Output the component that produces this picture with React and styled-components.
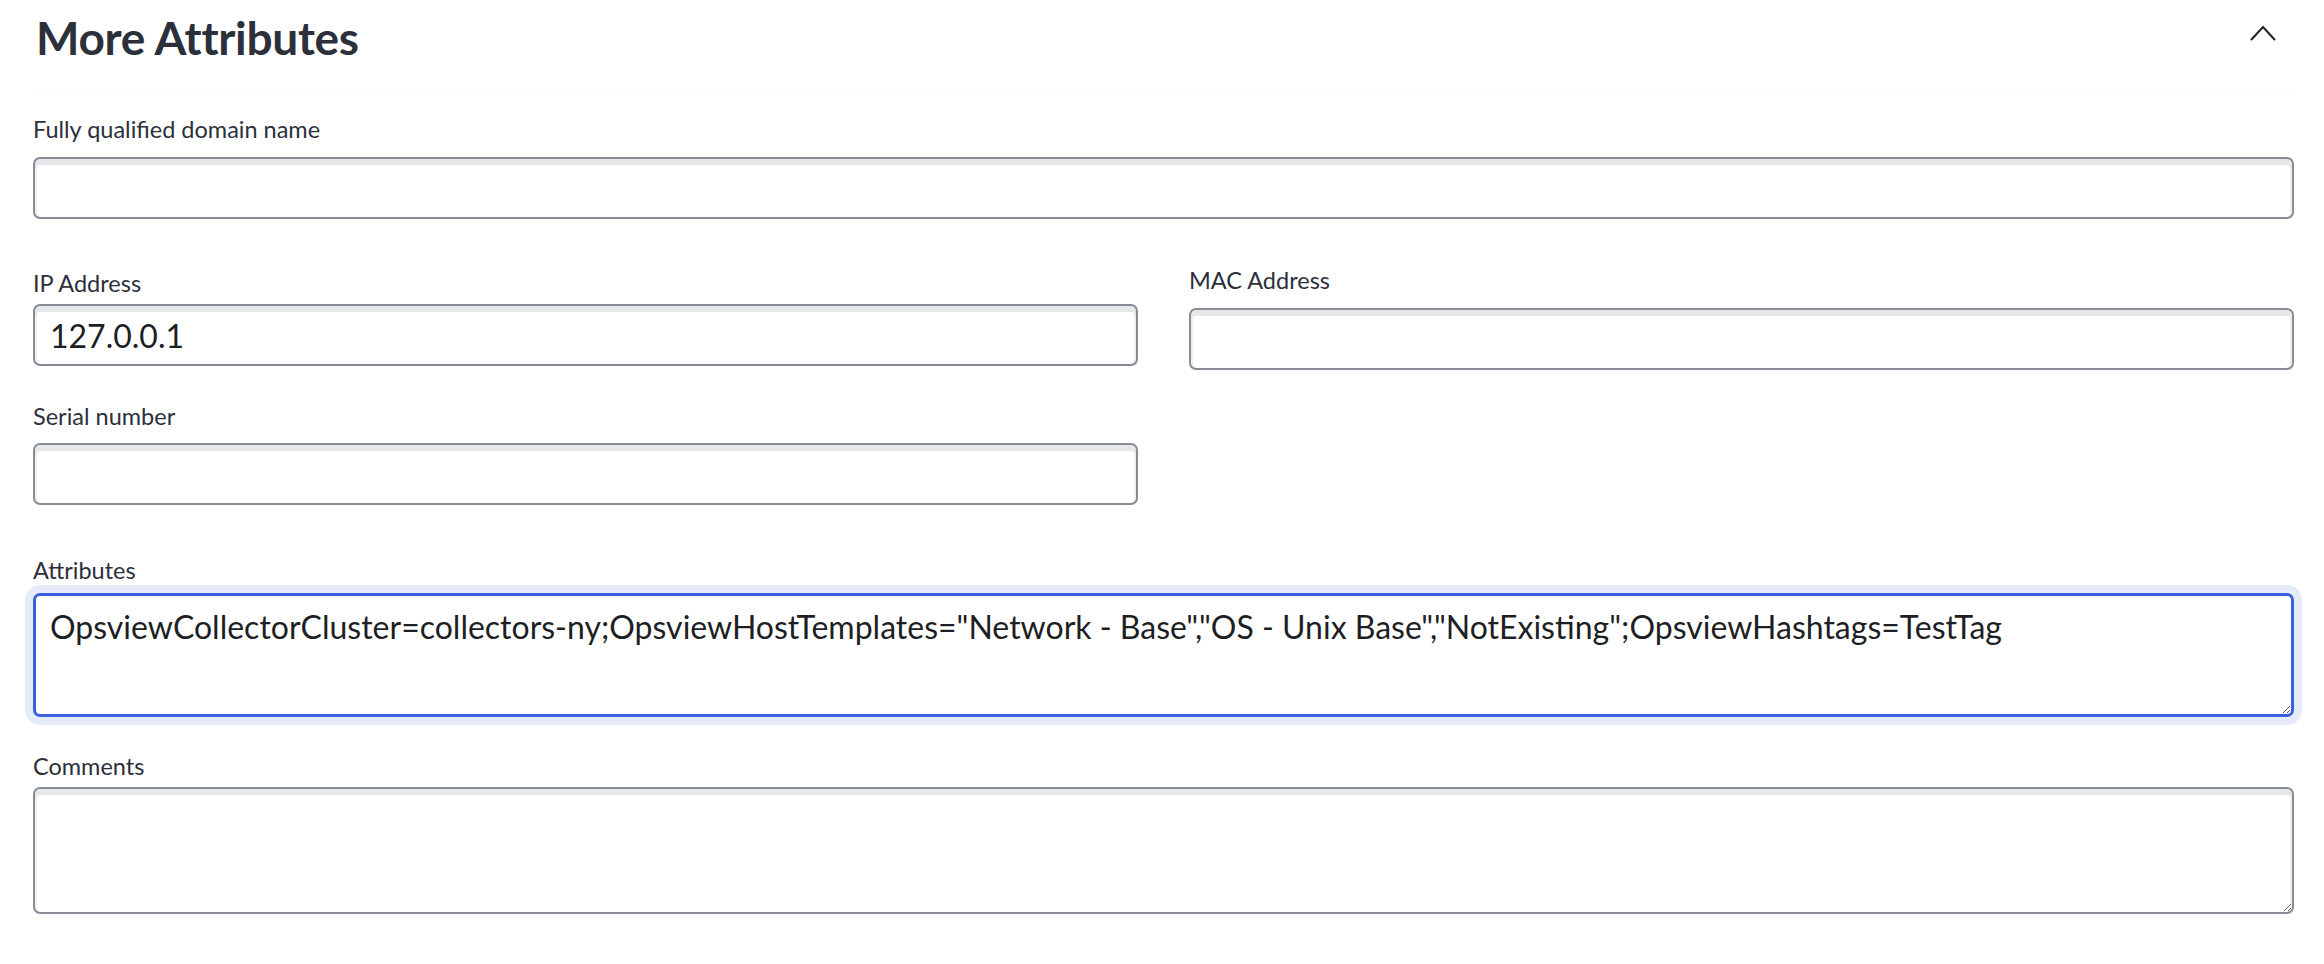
import React from "react";
import styled, { createGlobalStyle } from "styled-components";

const GlobalStyle = createGlobalStyle`
  body {
    margin: 0;
    background: #ffffff;
    font-family: Lato, "Open Sans", sans-serif;
    color: #2b303b;
  }
`;

const Section = styled.section`
  padding: 10px 30px 30px 33px;
`;

const Header = styled.div`
  display: flex;
  justify-content: space-between;
  align-items: flex-start;
  height: 78px;
  border-bottom: 1px dotted #f7f7f8;
  margin-bottom: 26px;
`;

const Title = styled.h2`
  margin: 0;
  padding-left: 3px;
  font-size: 46px;
  line-height: 55px;
  font-weight: 700;
  color: #2b303b;
  letter-spacing: -0.3px;
`;

const Toggle = styled.button`
  border: 0;
  background: none;
  padding: 0;
  margin: 15px 18px 0 0;
  cursor: pointer;
  display: flex;
`;

const Form = styled.form`
  display: flex;
  flex-direction: column;
`;

const Row = styled.div`
  display: grid;
  grid-template-columns: 1fr 1fr;
  column-gap: 51px;
  align-items: start;
  margin-top: ${(p) => p.$mt || 0}px;
`;

const Field = styled.div`
  display: flex;
  flex-direction: column;
  margin-top: ${(p) => p.$mt || 0}px;
  padding-top: ${(p) => p.$pt || 0}px;
`;

const Label = styled.label`
  display: block;
  font-size: 23.5px;
  line-height: 28px;
  color: #2b303b;
  margin-bottom: ${(p) => p.$gap}px;
`;

const Input = styled.input`
  box-sizing: border-box;
  width: 100%;
  height: 62px;
  margin: 0;
  padding: 0 15px;
  border: 2px solid #878c97;
  border-radius: 7px;
  background: #ffffff;
  box-shadow: inset 0 6px 0 #e6e7e8, inset 2px 0 0 #eeefef,
    inset -2px 0 0 #eeefef;
  font-family: Lato, "Open Sans", sans-serif;
  font-size: 32px;
  color: #1d1f24;
  outline: none;
`;

const TextArea = styled.textarea`
  box-sizing: border-box;
  display: block;
  width: 100%;
  height: ${(p) => p.$h}px;
  margin: 0;
  padding: ${(p) => (p.$focused ? "12px 14px" : "13px 15px")};
  border: ${(p) => (p.$focused ? "3px solid #3c5fe0" : "2px solid #878c97")};
  border-radius: 7px;
  background: #ffffff;
  box-shadow: ${(p) =>
    p.$focused
      ? "0 0 0 8px #e6ebfa"
      : "inset 0 6px 0 #e6e7e8, inset 2px 0 0 #eeefef, inset -2px 0 0 #eeefef"};
  font-family: Lato, "Open Sans", sans-serif;
  font-size: 32px;
  line-height: 1.2;
  color: #1d1f24;
  outline: none;
`;

function ChevronUp() {
  return (
    <svg width="26" height="16" viewBox="0 0 26 16" fill="none">
      <polyline
        points="1.5,14.5 13,2 24.5,14.5"
        stroke="#1f2329"
        strokeWidth="2"
        strokeLinecap="round"
        strokeLinejoin="miter"
      />
    </svg>
  );
}

export default function App() {
  return (
    <>
      <GlobalStyle />
      <Section>
        <Header>
          <Title>More Attributes</Title>
          <Toggle type="button" aria-label="Collapse">
            <ChevronUp />
          </Toggle>
        </Header>
        <Form>
          <Field>
            <Label $gap={14}>Fully qualified domain name</Label>
            <Input type="text" defaultValue="" />
          </Field>
          <Row $mt={47}>
            <Field $pt={3}>
              <Label $gap={7}>IP Address</Label>
              <Input type="text" defaultValue="127.0.0.1" />
            </Field>
            <Field>
              <Label $gap={14}>MAC Address</Label>
              <Input type="text" defaultValue="" />
            </Field>
          </Row>
          <Row $mt={32}>
            <Field>
              <Label $gap={13}>Serial number</Label>
              <Input type="text" defaultValue="" />
            </Field>
          </Row>
          <Field $mt={51}>
            <Label $gap={9}>Attributes</Label>
            <TextArea
              $focused
              $h={124}
              defaultValue={
                'OpsviewCollectorCluster=collectors-ny;OpsviewHostTemplates="Network - Base","OS - Unix Base","NotExisting";OpsviewHashtags=TestTag'
              }
            />
          </Field>
          <Field $mt={35}>
            <Label $gap={7}>Comments</Label>
            <TextArea $h={127} defaultValue="" />
          </Field>
        </Form>
      </Section>
    </>
  );
}
